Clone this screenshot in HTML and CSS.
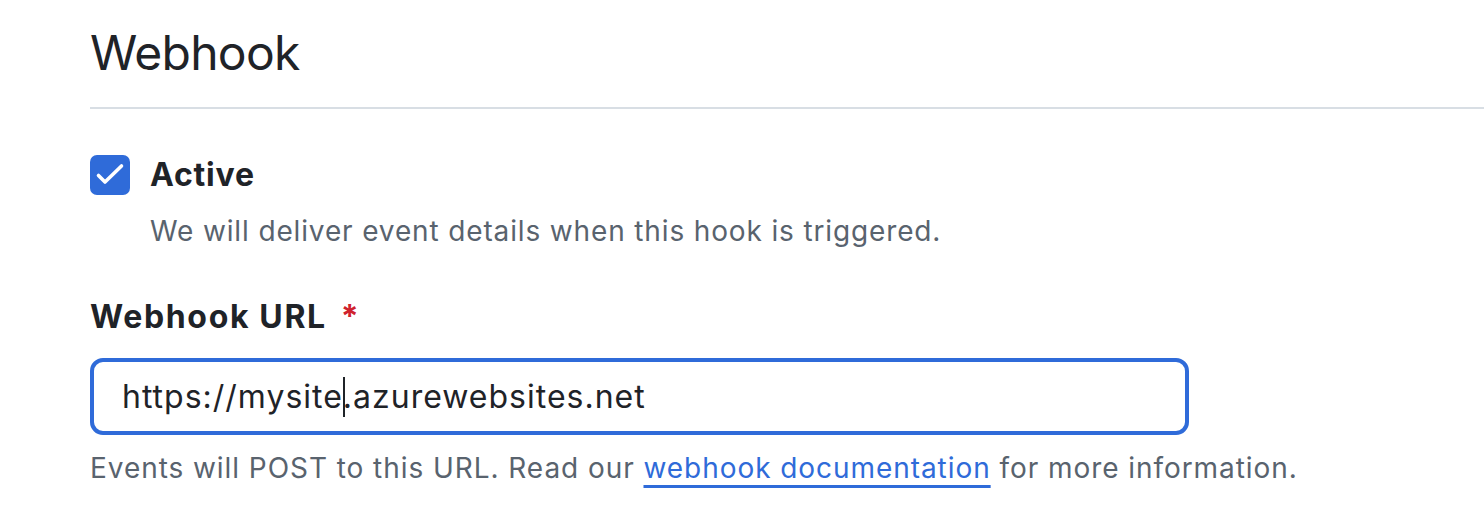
FILE: index.html
```html
<!DOCTYPE html>
<html lang="en">
<head>
<meta charset="utf-8">
<title>Webhook</title>
<link rel="stylesheet" href="styles.css">
</head>
<body>
<main class="page">
  <h2 class="title">Webhook</h2>
  <div class="check-row">
    <span class="checkbox" role="checkbox" aria-checked="true">
      <svg viewBox="0 0 40 40" width="40" height="40" aria-hidden="true"><polyline points="8.5,20.5 15,27 31.5,11" fill="none" stroke="#fff" stroke-width="3.6" stroke-linecap="round" stroke-linejoin="round"/></svg>
    </span>
    <span class="check-label">Active</span>
  </div>
  <p class="check-note">We will deliver event details when this hook is triggered.</p>
  <label class="field-label">Webhook URL<span class="req">*</span></label>
  <div class="input" role="textbox">https://mysite<span class="caret"></span>.azurewebsites.net</div>
  <p class="hint">Events will POST to this URL. Read our <a href="#" class="link">webhook documentation</a> for more information.</p>
</main>
</body>
</html>
```
FILE: styles.css
```css
* { box-sizing: border-box; }
html, body { margin: 0; padding: 0; background: #fff; }
body {
  font-family: Inter, "Liberation Sans", Arial, sans-serif;
  color: #1f2328;
}
.page { padding-left: 90px; }
.title {
  margin: 0;
  padding: 23px 0 24px;
  font-size: 48px;
  line-height: 60px;
  font-weight: 400;
  letter-spacing: -0.7px;
  border-bottom: 2px solid #d8dee4;
}
.check-row {
  display: flex;
  align-items: flex-start;
  gap: 20px;
  margin-top: 46px;
}
.checkbox {
  width: 40px;
  height: 40px;
  border-radius: 7px;
  background: #2f6bd9;
  display: block;
}
.checkbox svg { display: block; }
.check-label {
  font-size: 32px;
  font-weight: 700;
  line-height: 40px;
  letter-spacing: 0.8px;
}
.check-note {
  margin: 16px 0 0 60px;
  font-size: 28px;
  line-height: 40px;
  letter-spacing: 0.86px;
  color: #59636e;
}
.field-label {
  display: block;
  margin-top: 46px;
  font-size: 32px;
  line-height: 40px;
  font-weight: 700;
  letter-spacing: 1.65px;
}
.req { color: #cf222e; margin-left: 14px; font-weight: 700; }
.input {
  margin-top: 21px;
  width: 1099px;
  height: 77px;
  border: 4px solid #2f6bd9;
  border-radius: 13px;
  padding: 0 28px;
  font-size: 32px;
  line-height: 70px;
  letter-spacing: 1px;
  color: #1f2328;
  white-space: nowrap;
}
.caret {
  display: inline-block;
  width: 2px;
  height: 40px;
  background: #1f2328;
  vertical-align: -9px;
  margin-right: -2px;
}
.hint {
  margin: 13px 0 0;
  font-size: 28px;
  line-height: 40px;
  letter-spacing: 0.94px;
  color: #59636e;
}
.link {
  color: #2f6bd9;
  text-decoration: underline;
  text-decoration-thickness: 3px;
  text-underline-offset: 7px;
}
```
